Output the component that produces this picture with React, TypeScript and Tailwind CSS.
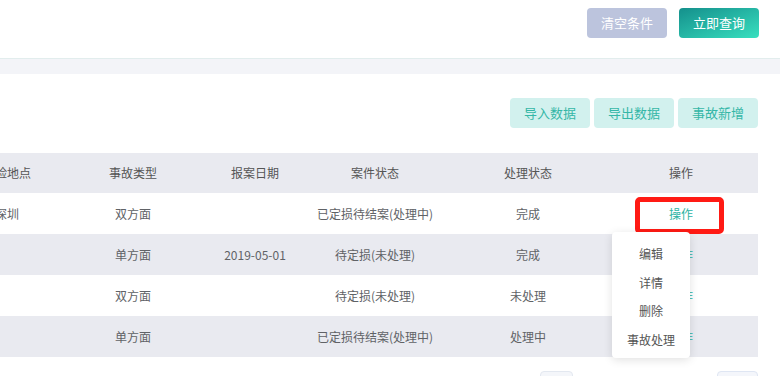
import React from "react";

const COLUMNS = [
  { key: "place", label: "出险地点", width: "w-[130px]" },
  { key: "type", label: "事故类型", width: "w-[122px]" },
  { key: "date", label: "报案日期", width: "w-[122px]" },
  { key: "case", label: "案件状态", width: "w-[118px]" },
  { key: "handle", label: "处理状态", width: "w-[188px]" },
  { key: "op", label: "操作", width: "w-[118px]" },
];

const ROWS = [
  { place: "深圳", type: "双方面", date: "", case: "已定损待结案(处理中)", handle: "完成" },
  { place: "", type: "单方面", date: "2019-05-01", case: "待定损(未处理)", handle: "完成" },
  { place: "", type: "双方面", date: "", case: "待定损(未处理)", handle: "未处理" },
  { place: "", type: "单方面", date: "", case: "已定损待结案(处理中)", handle: "处理中" },
];

const MENU = ["编辑", "详情", "删除", "事故处理"];

export default function App() {
  return (
    <main className="h-[376px] w-[780px] overflow-hidden bg-white text-[12px] text-[#606266] [font-family:'Noto_Sans_CJK_SC',sans-serif]">
      {/* search actions */}
      <div className="flex h-[58px] items-start justify-end gap-3 pr-[21px] pt-2">
        <button className="h-[30px] w-[80px] rounded bg-[#bcc4dd] text-[13px] text-white">
          清空条件
        </button>
        <button className="h-[30px] w-[80px] rounded bg-gradient-to-br from-[#14908c] to-[#38e0bf] text-[13px] text-white">
          立即查询
        </button>
      </div>

      <div className="h-[16px] border-t border-[#e2eded] bg-[#f3f4f8]" />

      {/* list card */}
      <section className="pr-[22px]">
        <div className="flex justify-end gap-[4px] pt-6">
          {["导入数据", "导出数据", "事故新增"].map((t) => (
            <button
              key={t}
              className="h-[30px] w-[80px] rounded bg-[#d2f1ee] text-[13px] text-[#35b7a7]"
            >
              {t}
            </button>
          ))}
        </div>

        <div className="relative mt-[25px]">
          <div className="flex h-[40px] items-center bg-[#e9eaf0] text-[#555]">
            <div className="-ml-[58px] flex">
              {COLUMNS.map((c) => (
                <div key={c.key} className={`${c.width} text-center`}>
                  {c.label}
                </div>
              ))}
            </div>
          </div>

          {ROWS.map((r, i) => (
            <div
              key={i}
              className={`flex h-[41px] items-center ${i % 2 === 1 ? "bg-[#e9eaf0]" : "bg-white"}`}
            >
              <div className="-ml-[58px] flex">
                <div className="w-[130px] text-center">{r.place}</div>
                <div className="w-[122px] text-center">{r.type}</div>
                <div className="w-[122px] text-center">{r.date}</div>
                <div className="w-[118px] text-center">{r.case}</div>
                <div className="w-[188px] text-center">{r.handle}</div>
                <div className="w-[118px] text-center text-[#2bb3a3]">操作</div>
              </div>
            </div>
          ))}

          {/* highlight on first row action */}
          <div className="absolute left-[635px] top-[44px] h-[37px] w-[89px] rounded-[5px] border-[5px] border-[#ff1a14]" />

          {/* action menu */}
          <div className="absolute left-[612px] top-[79px] flex h-[126px] w-[78px] flex-col items-center rounded bg-white pt-[10px] shadow-[0_2px_10px_rgba(0,0,0,0.12)]">
            {MENU.map((m) => (
              <div key={m} className="h-[28.5px] text-[12px] leading-[24px] text-[#555]">
                {m}
              </div>
            ))}
          </div>
        </div>

        {/* pagination, cut off at the bottom */}
        <div className="mt-[14px] flex">
          <div className="ml-[540px] h-[28px] w-[33px] rounded border border-[#e3e8f0] bg-[#f4f6fa]" />
          <div className="ml-auto h-[28px] w-[41px] rounded border border-[#dfe6f3] bg-[#f4f6fb]" />
        </div>
      </section>
    </main>
  );
}
